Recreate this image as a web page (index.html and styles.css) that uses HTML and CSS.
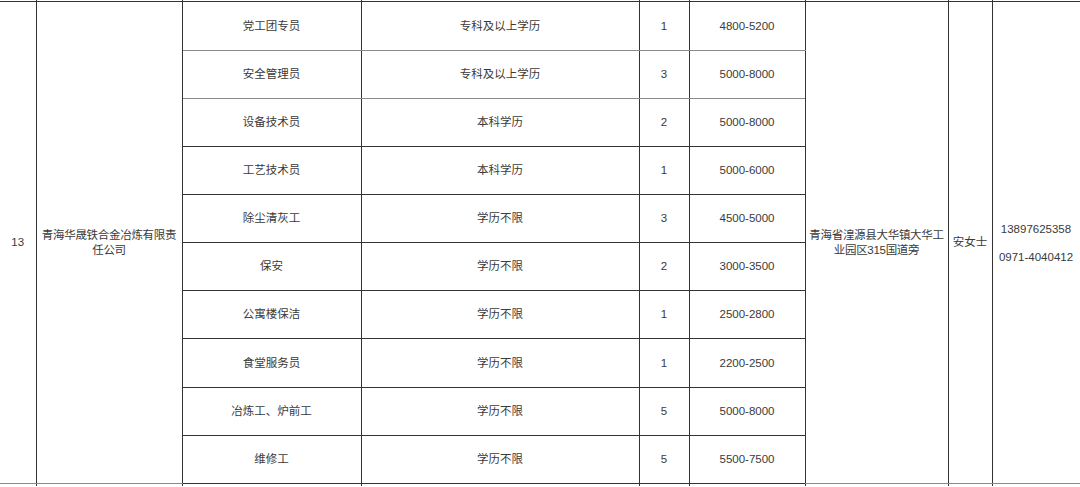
FILE: index.html
```html
<!DOCTYPE html>
<html lang="zh">
<head>
<meta charset="utf-8">
<link rel="stylesheet" href="styles.css">
</head>
<body>
<table class="jobs">
  <colgroup>
    <col class="c-no"><col class="c-co"><col class="c-pos"><col class="c-edu"><col class="c-num"><col class="c-pay"><col class="c-addr"><col class="c-contact"><col class="c-tel">
  </colgroup>
  <tr class="prev"><td></td><td></td><td></td><td></td><td></td><td></td><td></td><td></td><td></td></tr>
  <tr class="r1">
    <td rowspan="10">13</td>
    <td rowspan="10" class="co">青海华晟铁合金冶炼有限责<br>任公司</td>
    <td>党工团专员</td><td>专科及以上学历</td><td class="g">1</td><td class="g-l">4800-5200</td>
    <td rowspan="10" class="addr">青海省湟源县大华镇大华工<br>业园区315国道旁</td>
    <td rowspan="10" class="g-l">安女士</td>
    <td rowspan="10" class="tel">13897625358<br><br>0971-4040412</td>
  </tr>
  <tr class="r2"><td>安全管理员</td><td>专科及以上学历</td><td>3</td><td class="g-l">5000-8000</td></tr>
  <tr class="r3"><td>设备技术员</td><td>本科学历</td><td>2</td><td class="g-l">5000-8000</td></tr>
  <tr class="r4"><td>工艺技术员</td><td>本科学历</td><td>1</td><td class="g-l">5000-6000</td></tr>
  <tr class="r5"><td>除尘清灰工</td><td>学历不限</td><td>3</td><td class="g-l">4500-5000</td></tr>
  <tr class="r6"><td>保安</td><td>学历不限</td><td>2</td><td class="g-l">3000-3500</td></tr>
  <tr class="r7"><td>公寓楼保洁</td><td>学历不限</td><td>1</td><td class="g-l">2500-2800</td></tr>
  <tr class="r8"><td>食堂服务员</td><td>学历不限</td><td>1</td><td class="g-l">2200-2500</td></tr>
  <tr class="r9"><td>冶炼工、炉前工</td><td>学历不限</td><td>5</td><td class="g-l">5000-8000</td></tr>
  <tr class="r10"><td>维修工</td><td>学历不限</td><td>5</td><td class="g-l">5500-7500</td></tr>
  <tr class="next"><td></td><td></td><td></td><td></td><td></td><td></td><td></td><td></td><td></td></tr>
</table>
</body>
</html>
```
FILE: styles.css
```css
html, body {
  margin: 0;
  padding: 0;
  background: #fff;
  overflow: hidden;
}
.jobs {
  border-collapse: collapse;
  table-layout: fixed;
  width: 1080px;
  font-family: "Liberation Sans", "Noto Sans CJK SC", sans-serif;
  font-size: 11.5px;
  line-height: 15px;
  color: #3a3a3a;
}
.c-no { width: 36px; }
.c-co { width: 146px; }
.c-pos { width: 179px; }
.c-edu { width: 278px; }
.c-num { width: 50px; }
.c-pay { width: 116px; }
.c-addr { width: 143px; }
.c-contact { width: 44px; }
.c-tel { width: 88px; }
.jobs td {
  border: 1px solid #333;
  padding: 0;
  text-align: center;
  vertical-align: middle;
  white-space: nowrap;
}
.jobs tr td:first-child { border-left: none; }
.jobs td.g-l { border-left-color: #999; }
.jobs tr td:last-child { border-right-color: #999; }
.prev td { height: 1px; border-top: none; }
.next td { height: 2px; border-bottom: none; }
.r1 td { height: 48px; }
.r2 td, .r3 td, .r4 td, .r5 td, .r6 td, .r7 td, .r9 td, .r10 td { height: 47px; }
.r8 td { height: 48px; }
.r1 td, .r2 td { border-bottom-color: #8a8a8a; }
.r2 td { border-top-color: #8a8a8a; }
.r3 td { border-top-color: #9a9a9a; }
.co { letter-spacing: -0.3px; }
.addr { letter-spacing: -0.3px; }
.tel { line-height: 14px; }
```
